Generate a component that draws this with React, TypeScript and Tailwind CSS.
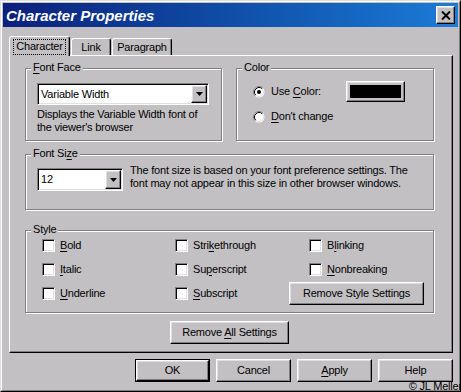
import React from 'react'

const bg = 'bg-[#c3c0c3]'
const raised =
  'border border-t-white border-l-white border-r-black border-b-black shadow-[inset_-1px_-1px_0_#808080,inset_1px_1px_0_#dfdfdf]'
const sunken =
  'border border-t-[#808080] border-l-[#808080] border-r-white border-b-white shadow-[inset_1px_1px_0_#000,inset_-1px_-1px_0_#dfdfdf]'

const Key = ({ children }: { children: React.ReactNode }) => (
  <span className="underline decoration-1 underline-offset-[2px]">{children}</span>
)

const Group: React.FC<{ label: React.ReactNode; className?: string; children?: React.ReactNode }> = ({
  label,
  className = '',
  children,
}) => (
  <div className={`relative border border-[#808080] shadow-[inset_1px_1px_0_#fff,1px_1px_0_#fff] ${className}`}>
    <span className={`absolute -top-[8px] left-[5px] px-[2px] ${bg}`}>{label}</span>
    {children}
  </div>
)

const Arrow = () => (
  <svg width="7" height="4" viewBox="0 0 7 4">
    <polygon points="0,0 7,0 3.5,4" fill="#000" />
  </svg>
)

const Select: React.FC<{ value: string; className?: string }> = ({ value, className = '' }) => (
  <div className={`flex bg-white p-[1px] ${sunken} ${className}`}>
    <span className="flex-1 self-center pl-[2px]">{value}</span>
    <span className={`flex w-[16px] items-center justify-center ${bg} ${raised}`}>
      <Arrow />
    </span>
  </div>
)

const Radio: React.FC<{ checked?: boolean }> = ({ checked }) => (
  <svg width="12" height="12" viewBox="0 0 12 12" className="shrink-0">
    <circle cx="6" cy="6" r="5.5" fill="#fff" />
    <path d="M2.11 9.89 A5.5 5.5 0 0 1 9.89 2.11" fill="none" stroke="#808080" />
    <path d="M2.82 9.18 A4.5 4.5 0 0 1 9.18 2.82" fill="none" stroke="#000" />
    <path d="M9.18 2.82 A4.5 4.5 0 0 1 2.82 9.18" fill="none" stroke="#dfdfdf" />
    {checked && <circle cx="6" cy="6" r="2" fill="#000" />}
  </svg>
)

const Check: React.FC<{ children: React.ReactNode; className?: string }> = ({ children, className = '' }) => (
  <div className={`flex items-center gap-[5px] ${className}`}>
    <span className={`h-[13px] w-[13px] shrink-0 bg-white ${sunken}`} />
    <span>{children}</span>
  </div>
)

const Button: React.FC<{ children: React.ReactNode; className?: string }> = ({ children, className = '' }) => (
  <div className={`flex items-center justify-center ${bg} ${raised} ${className}`}>{children}</div>
)

export default function App() {
  return (
    <div
      className={`relative h-[392px] w-[461px] overflow-hidden border border-t-[#dfdfdf] border-l-[#dfdfdf] border-r-black border-b-black ${bg} font-['Liberation_Sans',Arial,sans-serif] text-[11px] leading-[13px] tracking-[-0.2px] text-black`}
    >
      <div className="h-full w-full border border-t-white border-l-white border-r-[#808080] border-b-[#808080] p-[1px]">
        {/* title bar */}
        <div className="flex h-[24px] items-center justify-between bg-linear-to-r from-[#0c1f7c] to-[#1c7cd6] pl-[3px] pr-[3px]">
          <span className="text-[15px] font-bold italic leading-none tracking-normal text-white">Character Properties</span>
          <div className={`flex h-[18px] w-[19px] items-center justify-center ${bg} ${raised}`}>
            <svg width="10" height="9" viewBox="0 0 10 9">
              <path d="M1 0.5 L9 8.5 M9 0.5 L1 8.5" stroke="#000" strokeWidth="2" />
            </svg>
          </div>
        </div>

        <div className="pl-[6px] pt-[9px]">
          {/* tabs */}
          <div className="flex h-[19px] items-end">
            <div
              className={`relative z-10 -mb-px flex h-[20px] w-[61px] items-center justify-center rounded-t-[3px] border-l border-t border-r border-l-white border-t-white border-r-black shadow-[inset_-1px_0_0_#808080] ${bg}`}
            >
              <span className="border border-dotted border-black px-[2px] pb-[1px]">Character</span>
            </div>
            <div className="ml-[1px] flex h-[17px] w-[40px] items-center justify-center rounded-t-[3px] border-l border-t border-r border-l-white border-t-white border-r-black shadow-[inset_-1px_0_0_#808080]">
              Link
            </div>
            <div className="ml-[1px] flex h-[17px] w-[60px] items-center justify-center rounded-t-[3px] border-l border-t border-r border-l-white border-t-white border-r-black shadow-[inset_-1px_0_0_#808080]">
              Paragraph
            </div>
          </div>

          {/* tab panel */}
          <div className="h-[298px] w-[444px] border border-t-white border-l-white border-r-black border-b-black pl-[15px] pt-[12px] shadow-[inset_-1px_-1px_0_#808080]">
            <div className="flex gap-[14px]">
              <Group
                label={
                  <>
                    <Key>F</Key>ont Face
                  </>
                }
                className="h-[73px] w-[197px] pl-[11px] pt-[14px]"
              >
                <Select value="Variable Width" className="h-[22px] w-[172px]" />
                <p className="mt-[3px] whitespace-nowrap">
                  Displays the Variable Width font of
                  <br />
                  the viewer's browser
                </p>
              </Group>

              <Group label="Color" className="h-[73px] w-[198px] pl-[16px] pt-[12px]">
                <div className="flex h-[21px] items-center">
                  <Radio checked />
                  <span className="ml-[6px] w-[75px]">
                    Use <Key>C</Key>olor:
                  </span>
                  <div className={`h-[21px] w-[59px] ${bg} ${raised} p-[3px]`}>
                    <div className="h-full w-full bg-black" />
                  </div>
                </div>
                <div className="mt-[4px] flex h-[21px] items-center">
                  <Radio />
                  <span className="ml-[6px]">
                    <Key>D</Key>on't change
                  </span>
                </div>
              </Group>
            </div>

            <Group
              label={
                <>
                  Font Si<Key>z</Key>e
                </>
              }
              className="mt-[13px] flex h-[56px] w-[409px] items-start pl-[11px] pt-[13px]"
            >
              <Select value="12" className="h-[23px] w-[86px]" />
              <p className="-mt-[4px] ml-[7px] whitespace-nowrap">
                The font size is based on your font preference settings. The
                <br />
                font may not appear in this size in other browser windows.
              </p>
            </Group>

            <Group label="Style" className="mt-[20px] h-[83px] w-[409px] pl-[16px] pt-[2px]">
              <div className="grid grid-cols-[133px_114px_135px] auto-rows-[24px] items-center">
                <Check>
                  <Key>B</Key>old
                </Check>
                <Check>
                  Stri<Key>k</Key>ethrough
                </Check>
                <Check className="pl-[20px]">
                  B<Key>l</Key>inking
                </Check>
                <Check>
                  <Key>I</Key>talic
                </Check>
                <Check>
                  Su<Key>p</Key>erscript
                </Check>
                <Check className="pl-[20px]">
                  <Key>N</Key>onbreaking
                </Check>
                <Check>
                  <Key>U</Key>nderline
                </Check>
                <Check>
                  <Key>S</Key>ubscript
                </Check>
                <Button className="h-[23px] w-[135px]">Remove Style Settings</Button>
              </div>
            </Group>

            <Button className="ml-[145px] mt-[8px] h-[23px] w-[119px]">
              <span>
                Remove <Key>A</Key>ll Settings
              </span>
            </Button>
          </div>

          {/* dialog buttons */}
          <div className="mt-[6px] flex w-[444px] justify-end gap-[6px]">
            <div className="h-[23px] w-[75px] border border-black">
              <Button className="h-full w-full">OK</Button>
            </div>
            <Button className="h-[23px] w-[75px]">Cancel</Button>
            <Button className="h-[23px] w-[75px]">
              <span>
                <Key>A</Key>pply
              </span>
            </Button>
            <Button className="h-[23px] w-[75px]">Help</Button>
          </div>
        </div>
      </div>

      <span className="absolute -bottom-[1px] -right-[2px] leading-[11px]">© JL Meller</span>
    </div>
  )
}
